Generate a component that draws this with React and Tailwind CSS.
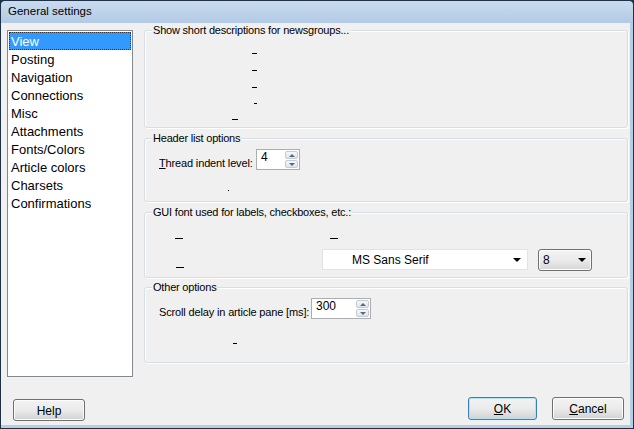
import React from 'react';

const items = ['View', 'Posting', 'Navigation', 'Connections', 'Misc', 'Attachments', 'Fonts/Colors', 'Article colors', 'Charsets', 'Confirmations'];

// group box with its caption sitting on the top border
const Group = ({ title, className, children }) => (
  <div className={`relative border border-[#d5dfe5] rounded-[3px] shadow-[inset_1px_1px_0_#fff,1px_1px_0_#fff] ${className}`}>
    <div className="-mt-[7px] ml-[7px] px-[1px] w-fit bg-[#f0f0f0] text-[11px] tracking-[-0.2px] leading-[13px]">{title}</div>
    {children}
  </div>
);

const Dash = ({ className }) => <div className={`absolute h-[1px] bg-black ${className}`} />;

const Spin = ({ value, width }) => (
  <div className={`flex h-[21px] bg-white border border-[#abadb3] ${width}`}>
    <span className="flex-1 pl-[4px] text-[12px] leading-[14px]">{value}</span>
    <div className="flex flex-col w-[13px] my-[1px] mr-[1px] gap-[1px]">
      <div className="flex-1 flex items-center justify-center bg-gradient-to-b from-[#f6f7f9] to-[#dfe4ea] border border-[#c3cbd5] rounded-[2px]">
        <div className="w-0 h-0 border-l-[3px] border-r-[3px] border-b-[3px] border-l-transparent border-r-transparent border-b-[#56688a]" />
      </div>
      <div className="flex-1 flex items-center justify-center bg-gradient-to-b from-[#f6f7f9] to-[#dfe4ea] border border-[#c3cbd5] rounded-[2px]">
        <div className="w-0 h-0 border-l-[3px] border-r-[3px] border-t-[3px] border-l-transparent border-r-transparent border-t-[#56688a]" />
      </div>
    </div>
  </div>
);

const Arrow = () => (
  <div className="w-0 h-0 border-l-[4px] border-r-[4px] border-t-[4px] border-l-transparent border-r-transparent border-t-black" />
);

const Button = ({ children, primary, className }) => (
  <button className={`rounded-[3px] border text-[12px] leading-[14px] pt-[1px] bg-gradient-to-b from-[#f3f3f3] via-[#ebebeb] to-[#d2d2d2] ${primary ? 'border-[#3c7fb1] shadow-[inset_0_0_0_1px_#b3e1f4]' : 'border-[#707070] shadow-[inset_0_0_0_1px_#fcfcfc]'} ${className}`}>
    {children}
  </button>
);

export default function App() {
  return (
    <div className="w-[634px] h-[429px] flex flex-col bg-[#1e3247] p-[1px] text-black" style={{ fontFamily: '"Liberation Sans", Arial, sans-serif' }}>
      {/* Title bar */}
      <div className="h-[22px] flex items-center pl-[7px] pb-[1px] bg-gradient-to-b from-[#cadbee] to-[#b2cae6] rounded-t-[4px] text-[11.5px]">
        General settings
      </div>
      <div className="flex-1 flex flex-col bg-[#f0f0f0] border-b-[3px] border-r-[3px] border-[#b4cfe5]">
        <div className="flex items-start">
          {/* Category list */}
          <div className="w-[126px] h-[347px] ml-[6px] mt-[7px] bg-white border border-[#828790] p-[1px]">
            {items.map((it, i) => (
              <div
                key={it}
                className={`h-[18px] pl-[2px] pt-[1px] text-[13px] leading-[18px] ${i === 0 ? 'bg-[#3399ff] text-white outline-1 outline-dotted outline-[#333] -outline-offset-1' : ''}`}
              >
                {it}
              </div>
            ))}
          </div>
          {/* Settings groups */}
          <div className="w-[484px] flex flex-col ml-[11px] mt-[7px]">
            <Group title="Show short descriptions for newsgroups..." className="h-[98px]">
              <Dash className="left-[107px] top-[22px] w-[5px]" />
              <Dash className="left-[107px] top-[39px] w-[5px]" />
              <Dash className="left-[107px] top-[56px] w-[5px]" />
              <Dash className="left-[109px] top-[72px] w-[3px]" />
              <Dash className="left-[87px] top-[88px] w-[6px]" />
            </Group>
            <Group title="Header list options" className="h-[64px] mt-[10px]">
              <div className="flex items-start mt-[4px] ml-[14px]">
                <span className="w-[97px] mt-[8px] text-[11px] tracking-[-0.15px] leading-[13px]"><u>T</u>hread indent level:</span>
                <Spin value="4" width="w-[44px]" />
              </div>
              <Dash className="left-[83px] top-[51px] w-[1px]" />
            </Group>
            <Group title="GUI font used for labels, checkboxes, etc.:" className="h-[66px] mt-[10px]">
              <Dash className="left-[30px] top-[25px] w-[8px]" />
              <Dash className="left-[185px] top-[25px] w-[8px]" />
              <Dash className="left-[31px] top-[54px] w-[8px]" />
              <div className="flex items-start gap-[10px] mt-[30px] ml-[177px]">
                <div className="w-[206px] h-[21px] bg-white border border-[#e3e3e3] flex items-center pl-[29px] pr-[6px] text-[12px]">
                  <span className="flex-1">MS Sans Serif</span>
                  <Arrow />
                </div>
                <div className="w-[54px] h-[22px] rounded-[3px] border border-[#707070] bg-gradient-to-b from-[#f3f3f3] via-[#ebebeb] to-[#d6d6d6] flex items-center pl-[4px] pr-[5px] text-[12px] shadow-[inset_0_0_0_1px_#fcfcfc]">
                  <span className="flex-1">8</span>
                  <Arrow />
                </div>
              </div>
            </Group>
            <Group title="Other options" className="h-[76px] mt-[9px]">
              <div className="flex items-start mt-[4px] ml-[14px]">
                <span className="w-[152px] mt-[8px] text-[11px] tracking-[-0.15px] leading-[13px]">Scroll delay in article pane [ms]:</span>
                <Spin value="300" width="w-[60px] h-[20px]" />
              </div>
              <Dash className="left-[88px] top-[55px] w-[4px]" />
            </Group>
          </div>
        </div>
        {/* Buttons */}
        <div className="flex items-start mt-[20px]">
          <Button className="w-[72px] h-[22px] ml-[12px] mt-[2px]">Help</Button>
          <Button primary className="w-[69px] h-[23px] ml-[383px]"><u>O</u>K</Button>
          <Button className="w-[72px] h-[23px] ml-[15px]"><u>C</u>ancel</Button>
        </div>
      </div>
    </div>
  );
}
